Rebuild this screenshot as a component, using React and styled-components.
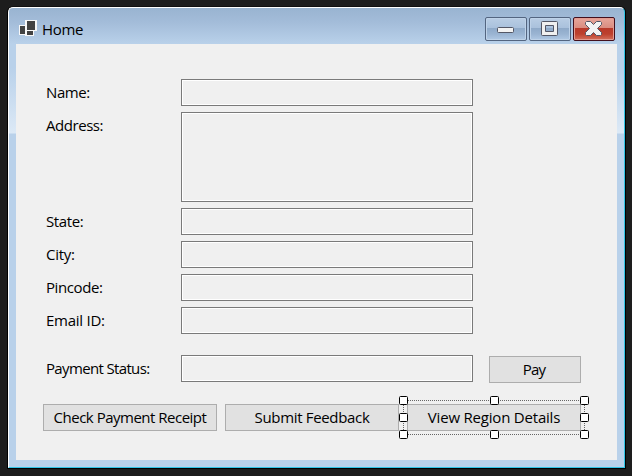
import React from "react";
import styled, { createGlobalStyle } from "styled-components";

const GlobalStyle = createGlobalStyle`
  * { box-sizing: border-box; }
  body {
    margin: 0;
    background: #1d1d1d;
    color: #000;
    font-family: "Open Sans", "Noto Sans", sans-serif;
    font-size: 15px;
    overflow: hidden;
  }
`;

const Desktop = styled.div`
  width: 632px;
  height: 476px;
  padding: 6px 6px 7px 7px;
  background: #1d1d1d;
`;

const Window = styled.div`
  width: 619px;
  height: 463px;
  border: 1px solid #000;
  border-top-color: #101010;
  border-radius: 6px 6px 0 0;
  background: linear-gradient(#1d1d1d 37px, #000 37px);
`;

const Frame = styled.div`
  width: 617px;
  height: 461px;
  border: 1px solid #fff;
  border-right-color: #31c5e6;
  border-bottom-color: #31c5e6;
  border-radius: 5px 5px 0 0;
  padding: 0 7px 7px;
  background: linear-gradient(#99b4d1 0, #a3bcd9 14px, #b9d1ea 36px, #b9d1ea 60px, #dce9f6 125px, #b9d1ea 126px);
`;

const TitleBar = styled.header`
  height: 36px;
  display: flex;
  align-items: flex-start;
  padding: 9px 2px 0 3px;
`;

const AppIcon = styled.svg`
  display: block;
  width: 18px;
  height: 16px;
  margin-top: 3px;
`;

const Text = styled.span`
  display: inline-block;
  white-space: nowrap;
  line-height: 18px;
  padding-bottom: 2px;
  vertical-align: top;
  font-stretch: 95%;
  letter-spacing: ${(p) => p.$track || 0}px;
`;

const Title = styled.h1`
  margin: 3px 0 0 5px;
  flex: 1;
  font: inherit;
  line-height: 20px;
  height: 20px;
`;

const Captions = styled.div`
  display: flex;
  gap: 2px;
`;

const CaptionButton = styled.button`
  width: 42px;
  height: 24px;
  padding: 0;
  margin: 0;
  display: block;
  border: 1px solid ${(p) => (p.$close ? "#43101d" : "#536580")};
  border-radius: 2px;
  box-shadow: inset 0 0 0 1px ${(p) => (p.$close ? "#e39b91" : "#bed2e8")};
  background: ${(p) =>
    p.$close
      ? "linear-gradient(#e7a69b 0, #d98c80 10px, #b8392a 10px, #bd402d 16px, #d4705c 22px)"
      : "linear-gradient(#b9cde4 0, #a9c1dc 10px, #8ea9c8 10px, #9ab4d2 16px, #b0c9e4 22px)"};
  svg { display: block; }
`;

const Client = styled.main`
  width: 601px;
  height: 416px;
  padding: 35px 0 0 27px;
  background: #f0f0f0;
`;

const Field = styled.div`
  display: flex;
  align-items: flex-start;
  height: ${(p) => p.$height || 27}px;
  margin-bottom: ${(p) => p.$gap ?? 6}px;
`;

const Label = styled.label`
  width: 138px;
  padding: 4px 0 0 3px;
  height: 24px;
`;

const Input = styled.div`
  width: 292px;
  height: 100%;
  border: 1px solid #7a7a7a;
  box-shadow: inset 0 0 0 1px #fff;
  background: #f0f0f0;
`;

const Button = styled.button`
  width: ${(p) => p.$width || 174}px;
  height: 27px;
  padding: 0;
  border: 1px solid #adadad;
  background: #e1e1e1;
  color: #000;
  font: inherit;
  display: flex;
  justify-content: center;
  align-items: center;
  flex: none;
`;

const PayButton = styled(Button)`
  margin: 1px 0 0 16px;
  padding-right: 2px;
`;

const Actions = styled.div`
  display: flex;
  gap: 8px;
  margin-top: 22px;
`;

const Selected = styled.div`
  position: relative;
`;

const Selection = styled.svg`
  position: absolute;
  left: -8px;
  top: -8px;
  width: 190px;
  height: 43px;
  pointer-events: none;
`;

const fields = [
  { label: "Name:", track: -0.4 },
  { label: "Address:", height: 90, track: -0.45 },
  { label: "State:", track: -0.4 },
  { label: "City:", track: -0.3 },
  { label: "Pincode:", track: -0.4 },
  { label: "Email ID:", gap: 21, track: -0.25 },
  { label: "Payment Status:", gap: 0, track: -0.65, pay: true },
];

const handles = [
  [0, 0], [91, 0], [181, 0],
  [0, 17], [181, 17],
  [0, 34], [91, 34], [181, 34],
];

function FormIcon() {
  return (
    <AppIcon viewBox="0 0 18 16" shapeRendering="crispEdges">
      <path fill="#f7f7f7" d="M0 5h6V0h12v11h-3v5H6v-1H0z" />
      <path fill="#424242" d="M1 6h5v8H1zM8 1h8v9H8zM8 11h6v4H8z" />
    </AppIcon>
  );
}

function MinimizeIcon() {
  return (
    <svg width="40" height="22">
      <rect x="11.5" y="9.5" width="16" height="5" rx="1" fill="#f2f2f2" stroke="#535766" />
    </svg>
  );
}

function MaximizeIcon() {
  return (
    <svg width="40" height="22">
      <path
        fill="#f0f0f0" stroke="#535766" fillRule="evenodd"
        d="M12.5 3.5h14q1 0 1 1v12q0 1-1 1h-14q-1 0-1-1v-12q0-1 1-1zM15.5 7.5v6h8v-6z"
      />
    </svg>
  );
}

function CloseIcon() {
  return (
    <svg width="40" height="22">
      <path
        fill="#f3f3f3" stroke="#535766" strokeLinejoin="round"
        d="M12.500 3.500h4l3 3 3-3h4l1 1v2l-4 4 4 4v2l-1 1h-4l-3-3-3 3h-4l-1-1v-2l4-4-4-4v-2z"
      />
    </svg>
  );
}

function SelectionHandles() {
  return (
    <Selection viewBox="0 0 190 43">
      <path
        d="M9 4.500H181M9 38.500H181M4.500 9V34M185.500 9V34"
        fill="none" stroke="#666" strokeDasharray="1 1" shapeRendering="crispEdges"
      />
      {handles.map(([x, y]) => (
        <rect key={`${x}-${y}`} x={x + 0.5} y={y + 0.5} width="8" height="8" rx="1" fill="#fff" stroke="#000" />
      ))}
    </Selection>
  );
}

export default function App() {
  return (
    <>
      <GlobalStyle />
      <Desktop>
        <Window>
          <Frame>
            <TitleBar>
              <FormIcon />
              <Title><Text $track={-0.3}>Home</Text></Title>
              <Captions>
                <CaptionButton aria-label="Minimize"><MinimizeIcon /></CaptionButton>
                <CaptionButton aria-label="Maximize"><MaximizeIcon /></CaptionButton>
                <CaptionButton $close aria-label="Close"><CloseIcon /></CaptionButton>
              </Captions>
            </TitleBar>
            <Client>
              {fields.map((f) => (
                <Field key={f.label} $height={f.height} $gap={f.gap}>
                  <Label><Text $track={f.track}>{f.label}</Text></Label>
                  <Input />
                  {f.pay && <PayButton $width={92}><Text $track={-0.8}>Pay</Text></PayButton>}
                </Field>
              ))}
              <Actions>
                <Button><Text $track={-0.5}>Check Payment Receipt</Text></Button>
                <Button><Text $track={-0.33}>Submit Feedback</Text></Button>
                <Selected>
                  <Button><Text $track={-0.2}>View Region Details</Text></Button>
                  <SelectionHandles />
                </Selected>
              </Actions>
            </Client>
          </Frame>
        </Window>
      </Desktop>
    </>
  );
}
